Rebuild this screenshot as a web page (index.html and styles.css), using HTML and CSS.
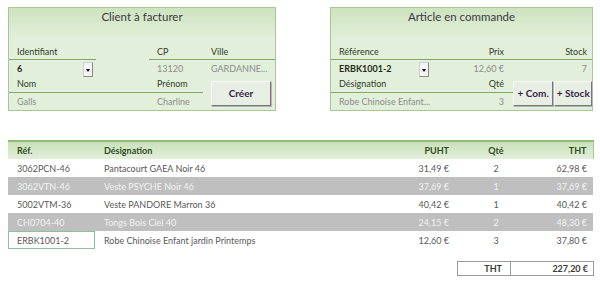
FILE: index.html
```html
<!DOCTYPE html>
<html lang="fr">
<head>
    <meta charset="UTF-8">
    <title>Facturation</title>
    <link rel="stylesheet" href="styles.css">
</head>
<body>
    <div class="forms">
        <div class="panel client">
            <div class="panel-title">Client à facturer</div>
            <div class="fields">
                <div class="label line">Identifiant</div>
                <div></div>
                <div class="label line">CP</div>
                <div class="label line">Ville</div>

                <div class="value strong with-drop">6 <span class="drop"></span></div>
                <div></div>
                <div class="value">13120</div>
                <div class="value">GARDANNE...</div>

                <div class="label line span2">Nom</div>
                <div class="label line">Prénom</div>
                <div class="btn-cell"><button class="btn">Créer</button></div>

                <div class="value span2">Galls</div>
                <div class="value">Charline</div>
            </div>
        </div>

        <div class="panel article">
            <div class="panel-title">Article en commande</div>
            <div class="fields">
                <div class="label line">Référence</div>
                <div class="label line right">Prix</div>
                <div class="label line right end">Stock</div>

                <div class="value strong with-drop">ERBK1001-2 <span class="drop"></span></div>
                <div class="value right">12,60 €</div>
                <div class="value right end">7</div>

                <div class="label line">Désignation</div>
                <div class="label line right">Qté</div>
                <div class="btn-cell">
                    <button class="btn">+ Com.</button>
                    <button class="btn">+ Stock</button>
                </div>

                <div class="value">Robe Chinoise Enfant...</div>
                <div class="value right">3</div>
            </div>
        </div>
    </div>

    <table class="lines">
        <thead>
            <tr>
                <th class="c-ref">Réf.</th>
                <th class="c-des">Désignation</th>
                <th class="c-pu">PUHT</th>
                <th class="c-qte">Qté</th>
                <th class="c-tot">THT</th>
            </tr>
        </thead>
        <tbody>
            <tr>
                <td class="c-ref">3062PCN-46</td>
                <td class="c-des">Pantacourt GAEA Noir 46</td>
                <td class="c-pu">31,49 €</td>
                <td class="c-qte">2</td>
                <td class="c-tot">62,98 €</td>
            </tr>
            <tr class="shade">
                <td class="c-ref">3062VTN-46</td>
                <td class="c-des">Veste PSYCHE Noir 46</td>
                <td class="c-pu">37,69 €</td>
                <td class="c-qte">1</td>
                <td class="c-tot">37,69 €</td>
            </tr>
            <tr>
                <td class="c-ref">5002VTM-36</td>
                <td class="c-des">Veste PANDORE Marron 36</td>
                <td class="c-pu">40,42 €</td>
                <td class="c-qte">1</td>
                <td class="c-tot">40,42 €</td>
            </tr>
            <tr class="shade">
                <td class="c-ref">CH0704-40</td>
                <td class="c-des">Tongs Bois Ciel 40</td>
                <td class="c-pu">24,15 €</td>
                <td class="c-qte">2</td>
                <td class="c-tot">48,30 €</td>
            </tr>
            <tr>
                <td class="c-ref selected">ERBK1001-2</td>
                <td class="c-des">Robe Chinoise Enfant jardin Printemps</td>
                <td class="c-pu">12,60 €</td>
                <td class="c-qte">3</td>
                <td class="c-tot">37,80 €</td>
            </tr>
        </tbody>
    </table>

    <div class="total">
        <div class="total-label">THT</div>
        <div class="total-value">227,20 €</div>
    </div>
</body>
</html>
```

FILE: styles.css
```css
* {
    box-sizing: border-box;
    margin: 0;
    padding: 0;
}

body {
    font-family: Lato, "Open Sans", sans-serif;
    font-size: 9px;
    color: #595959;
    background: #fff;
    width: 600px;
    height: 285px;
    overflow: hidden;
}

.forms {
    display: flex;
    justify-content: space-between;
    padding: 7px 7px 0 8px;
}

.panel {
    border: 1px solid #a9c795;
    background: linear-gradient(#cde3bf 0, #e2efda 30px, #e2efda 100%);
    height: 104px;
}

.client {
    width: 268px;
}

.article {
    width: 263px;
}

.panel-title {
    text-align: center;
    font-size: 11.5px;
    color: #3a3a3a;
    height: 37px;
    padding-top: 2px;
}

.fields {
    display: grid;
    grid-template-rows: 15px 17px 16px 17px;
}

.client .fields {
    grid-template-columns: 87px 53px 54px 72px;
}

.article .fields {
    grid-template-columns: 110px 72px 79px;
}

.label {
    color: #2f3b26;
    padding-left: 8px;
    line-height: 14px;
}

.line {
    border-bottom: 1px solid #7fa86a;
}

.value {
    padding-left: 8px;
    line-height: 17px;
    color: #8c8c8c;
    white-space: nowrap;
}

.value.strong {
    font-weight: bold;
    color: #1f2a18;
}

.right {
    text-align: right;
    padding-right: 9px;
}

.end {
    padding-right: 5px;
}

.span2 {
    grid-column: span 2;
}

.with-drop {
    position: relative;
}

.drop {
    position: absolute;
    right: 3px;
    top: 2px;
    width: 10px;
    height: 15px;
    background: #f4f4f4;
    border: 1px solid #d0d0d0;
    border-right-color: #8a8a8a;
    border-bottom-color: #8a8a8a;
}

.drop::after {
    content: '';
    position: absolute;
    left: 2px;
    top: 6px;
    border-left: 2px solid transparent;
    border-right: 2px solid transparent;
    border-top: 3px solid #111;
}

.article .with-drop .drop {
    right: 12px;
}

.btn-cell {
    grid-row: span 2;
    display: flex;
    align-items: center;
    justify-content: center;
    gap: 1px;
}

.client .btn-cell {
    padding: 2px 3px 3px 7px;
}

.article .btn-cell {
    grid-column: 3;
    padding: 2px 0 3px 0;
}

.btn {
    font-family: inherit;
    font-weight: bold;
    font-size: 10px;
    color: #3b1f47;
    background: #e7eee3;
    border: 1px solid #f7f7f7;
    border-right-color: #777;
    border-bottom-color: #777;
    box-shadow: 1px 1px 0 #b5b5b5;
    height: 25px;
    cursor: pointer;
}

.client .btn {
    width: 60px;
}

.article .btn {
    width: 41px;
    padding: 0;
}

.article .btn + .btn {
    width: 38px;
}

.lines {
    margin: 29px 0 0 8px;
    width: 585px;
    border-collapse: collapse;
    table-layout: fixed;
}

.lines th {
    height: 18px;
    font-weight: bold;
    color: #2f4a1e;
    text-align: left;
    background: linear-gradient(#c9e1b9, #e2efda);
    border-top: 2px solid #8fba72;
}

.lines th:last-child {
    border-right: 1px solid #a9c795;
}

.lines td {
    height: 18px;
    white-space: nowrap;
}

.lines th,
.lines td {
    padding: 0 0 0 9px;
}

.shade td {
    background: #bfbfbf;
    color: #f2f2f2;
}

.c-ref {
    width: 87px;
}

.c-des {
    width: 285px;
}

.lines .c-pu {
    width: 77px;
    text-align: right;
    padding-right: 8px;
}

.lines .c-qte {
    width: 83px;
    text-align: center;
    padding: 0 5px 0 0;
}

.lines .c-tot {
    width: 53px;
    text-align: right;
    padding-right: 6px;
}

.lines .selected {
    outline: 1px solid #8fbf9f;
    outline-offset: -1px;
}

.total {
    display: flex;
    margin: 12px 0 0 457px;
    width: 137px;
    height: 15px;
    border: 1px solid #9a9a9a;
    font-weight: bold;
    color: #3a3a3a;
    line-height: 13px;
}

.total-label {
    width: 53px;
    text-align: right;
    padding-right: 8px;
    border-right: 1px solid #9a9a9a;
}

.total-value {
    flex: 1;
    text-align: right;
    padding-right: 5px;
}
```
